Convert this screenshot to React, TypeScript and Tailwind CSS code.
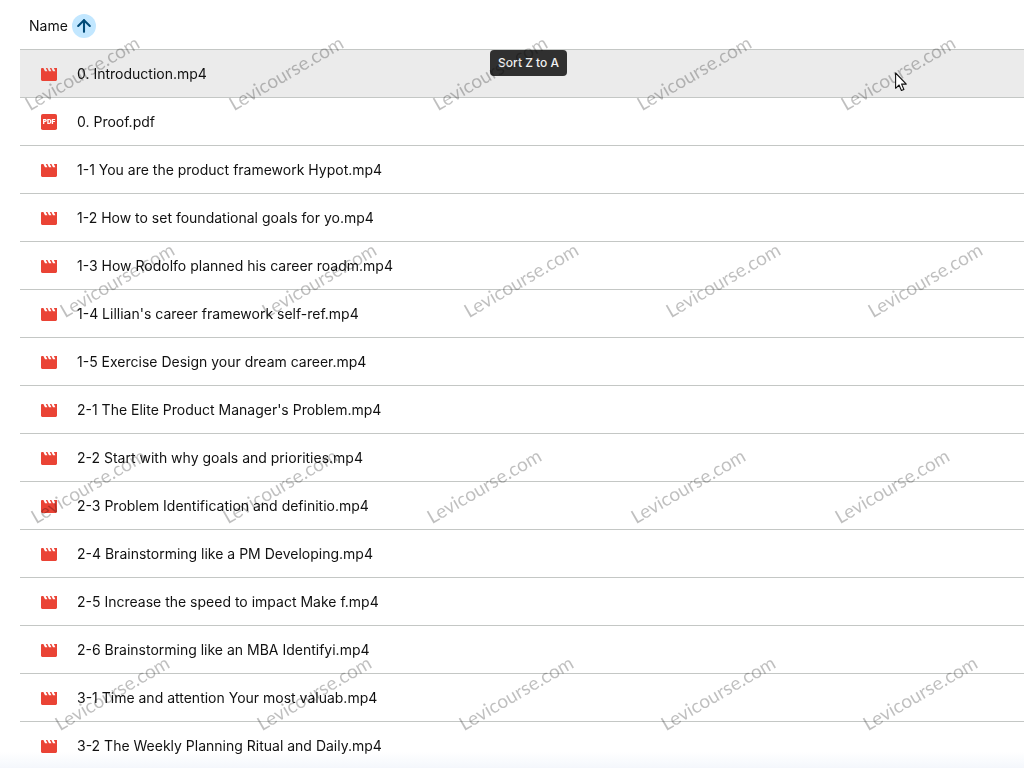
import { ArrowUp } from 'lucide-react';

type DriveFile = { name: string; kind: 'video' | 'pdf' };

const files: DriveFile[] = [
  { name: '0. Introduction.mp4', kind: 'video' },
  { name: '0. Proof.pdf', kind: 'pdf' },
  { name: '1-1 You are the product framework Hypot.mp4', kind: 'video' },
  { name: '1-2 How to set foundational goals for yo.mp4', kind: 'video' },
  { name: '1-3 How Rodolfo planned his career roadm.mp4', kind: 'video' },
  { name: "1-4 Lillian's career framework self-ref.mp4", kind: 'video' },
  { name: '1-5 Exercise Design your dream career.mp4', kind: 'video' },
  { name: "2-1 The Elite Product Manager's Problem.mp4", kind: 'video' },
  { name: '2-2 Start with why goals and priorities.mp4', kind: 'video' },
  { name: '2-3 Problem Identification and definitio.mp4', kind: 'video' },
  { name: '2-4 Brainstorming like a PM Developing.mp4', kind: 'video' },
  { name: '2-5 Increase the speed to impact Make f.mp4', kind: 'video' },
  { name: '2-6 Brainstorming like an MBA Identifyi.mp4', kind: 'video' },
  { name: '3-1 Time and attention Your most valuab.mp4', kind: 'video' },
  { name: '3-2 The Weekly Planning Ritual and Daily.mp4', kind: 'video' },
];

// centre of every stamp, one entry per band
const watermarkBands = [
  { y: 73, xs: [82, 286, 490, 694, 898] },
  { y: 280, xs: [117, 319, 521, 723, 925] },
  { y: 486, xs: [88, 280, 484, 688, 892] },
  { y: 693, xs: [112, 314, 516, 718, 920] },
];

function VideoIcon() {
  return (
    <svg viewBox="2 4 20 16" className="h-[13px] w-4" fill="#ea4335" aria-hidden="true">
      <path d="M18 4l2 4h-3l-2-4h-2l2 4h-3l-2-4H8l2 4H7L5 4H3.2C2.5 4 2 4.5 2 5.2v13.2c0 .9.7 1.6 1.6 1.6h16.8c.9 0 1.6-.7 1.6-1.6V4z" />
    </svg>
  );
}

function PdfIcon() {
  return (
    <svg viewBox="0 0 16 16" className="size-4" aria-hidden="true">
      <rect width="16" height="16" rx="1.8" fill="#ea4335" />
      <text
        x="8"
        y="10.4"
        textAnchor="middle"
        fontFamily="Inter, sans-serif"
        fontWeight="900"
        fontSize="6.4"
        fill="#fff"
      >
        PDF
      </text>
    </svg>
  );
}

function FileRow({ file, active }: { file: DriveFile; active: boolean }) {
  return (
    <tr className={active ? 'bg-[#ebebeb]' : 'hover:bg-[#ebebeb]'}>
      <td className="h-12 border-b border-[#c4c7c5] p-0">
        <div className="flex items-center gap-5 pt-px pl-[21px]">
          <span className="flex w-4 shrink-0 justify-center">
            {file.kind === 'pdf' ? <PdfIcon /> : <VideoIcon />}
          </span>
          <span className="truncate">{file.name}</span>
        </div>
      </td>
    </tr>
  );
}

function Watermarks() {
  return (
    <div className="pointer-events-none absolute inset-0 overflow-hidden" aria-hidden="true">
      {watermarkBands.map((band) =>
        band.xs.map((x) => (
          <span
            key={`${x}-${band.y}`}
            className="absolute -translate-x-1/2 -translate-y-1/2 -rotate-30 font-['Lato',sans-serif] text-[19px] leading-6 whitespace-nowrap text-black/25"
            style={{ left: x, top: band.y }}
          >
            Levicourse.com
          </span>
        ))
      )}
    </div>
  );
}

function Pointer() {
  return (
    <svg
      viewBox="0 0 12 20"
      className="pointer-events-none absolute top-[72px] left-[895px] h-5 w-3"
      aria-hidden="true"
    >
      <path
        d="M.6 1v15.3l3.5-3.3 2.3 5.5 2.5-1-2.3-5.4h4.7z"
        fill="#fff"
        stroke="#111"
        strokeWidth="1.1"
        strokeLinejoin="round"
      />
    </svg>
  );
}

export default function App() {
  return (
    <main className="relative h-screen overflow-hidden bg-white font-['Inter',sans-serif] text-sm text-[#111]">
      <div className="pl-5">
        <table className="w-full table-fixed border-separate border-spacing-0">
          <thead>
            <tr>
              <th
                scope="col"
                aria-sort="ascending"
                className="h-[50px] border-b border-[#c4c7c5] p-0 text-left font-normal"
              >
                <div className="flex items-center gap-1 pt-0.5 pl-[9px]">
                  Name
                  <button
                    type="button"
                    aria-label="Reverse sort direction"
                    aria-describedby="sort-tip"
                    className="flex size-6 items-center justify-center rounded-full bg-[#c2e7ff] text-[#004a77]"
                  >
                    <ArrowUp className="size-5" strokeWidth={2.5} />
                  </button>
                </div>
              </th>
            </tr>
          </thead>
          <tbody>
            {files.map((file, i) => (
              <FileRow key={file.name} file={file} active={i === 0} />
            ))}
          </tbody>
        </table>
      </div>

      {/* Fade into the app background under the list */}
      <div className="absolute inset-x-0 bottom-0 h-4 bg-linear-to-b from-transparent to-[#f4f7fc] mix-blend-multiply" />

      <div
        id="sort-tip"
        role="tooltip"
        className="absolute top-[50px] left-[490px] flex h-[26px] w-[77px] items-center justify-center rounded bg-[#303030] text-xs font-medium whitespace-nowrap text-[#f2f2f2]"
      >
        Sort Z to A
      </div>

      <Watermarks />
      <Pointer />
    </main>
  );
}
